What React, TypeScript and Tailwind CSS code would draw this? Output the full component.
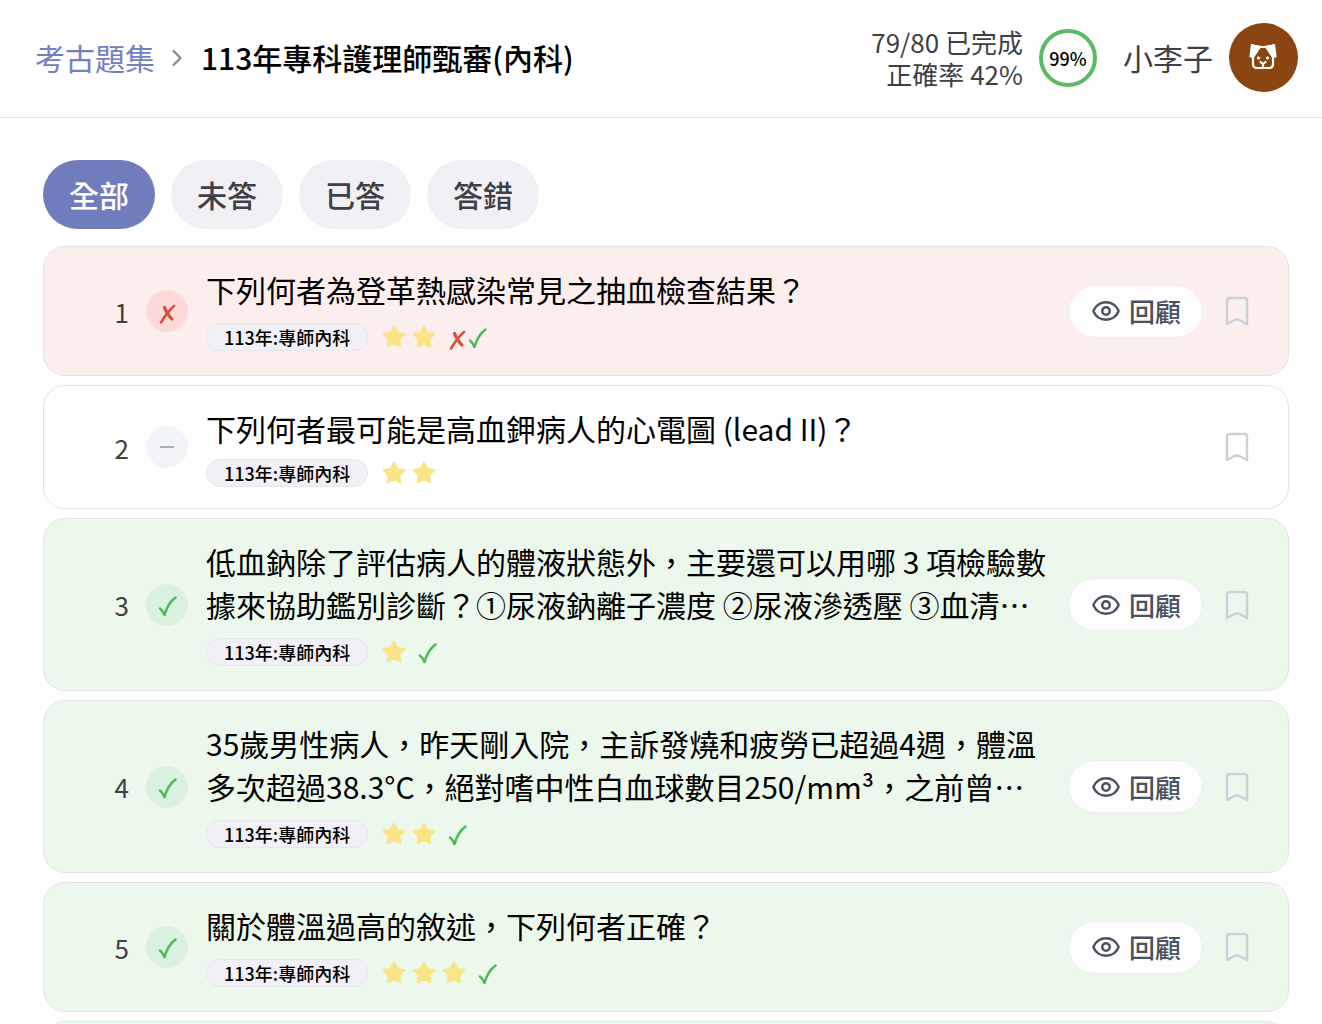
import { ChevronRight, Eye } from 'lucide-react';

type Mark = 'right' | 'wrong';

type Question = {
  id: number;
  text: string;
  tag: string;
  stars: number;
  marks: Mark[];
};

const filters = ['全部', '未答', '已答', '答錯'];

const questions: Question[] = [
  { id: 1, text: '下列何者為登革熱感染常見之抽血檢查結果？', tag: '113年:專師內科', stars: 2, marks: ['wrong', 'right'] },
  { id: 2, text: '下列何者最可能是高血鉀病人的心電圖 (lead II)？', tag: '113年:專師內科', stars: 2, marks: [] },
  {
    id: 3,
    text: '低血鈉除了評估病人的體液狀態外，主要還可以用哪 3 項檢驗數據來協助鑑別診斷？①尿液鈉離子濃度 ②尿液滲透壓 ③血清⋯',
    tag: '113年:專師內科',
    stars: 1,
    marks: ['right'],
  },
  {
    id: 4,
    text: '35歲男性病人，昨天剛入院，主訴發燒和疲勞已超過4週，體溫多次超過38.3°C，絕對嗜中性白血球數目250/mm³，之前曾⋯',
    tag: '113年:專師內科',
    stars: 2,
    marks: ['right'],
  },
  { id: 5, text: '關於體溫過高的敘述，下列何者正確？', tag: '113年:專師內科', stars: 3, marks: ['right'] },
  { id: 6, text: '', tag: '', stars: 0, marks: ['right'] },
];

function MarkIcon({ mark }: { mark: Mark }) {
  if (mark === 'wrong') {
    return (
      <svg viewBox="0 0 20 26" className="h-[26px] w-5 text-[#d9503f]" fill="none" stroke="currentColor" strokeLinecap="round">
        <path d="M17 8C12.500 12 7.500 18.500 4 24.500" strokeWidth="2.600" />
        <path d="M7.500 9.500C9 13 11.500 18 15 21" strokeWidth="3.200" />
      </svg>
    );
  }
  return (
    <svg viewBox="0 0 20 26" className="h-[26px] w-5 text-[#4fb95f]" fill="none" stroke="currentColor" strokeLinecap="round" strokeLinejoin="round">
      <path d="M3 16.500C5 18 6.500 20.500 7.500 23C9.500 16 13.500 9 18.500 5.500" strokeWidth="2.600" />
    </svg>
  );
}

function StarIcon() {
  return (
    <svg viewBox="0 0 24 24" className="size-[26px] text-[#fbe486]" fill="currentColor" stroke="currentColor" strokeWidth="2" strokeLinejoin="round">
      <path d="M12 2.500l2.900 5.900 6.600 1-4.800 4.600 1.200 6.500-5.900-3.100-5.900 3.100 1.200-6.500L2.500 9.400l6.600-1z" />
    </svg>
  );
}

function BookmarkIcon() {
  return (
    <svg viewBox="0 0 24 30" className="h-[30px] w-6" fill="none" stroke="currentColor" strokeWidth="2.500" strokeLinejoin="round">
      <path d="M4.500 2h15q2.500 0 2.500 2.500V28l-6.500-3.500q-3.500-2-7 0L2 28V4.500Q2 2 4.500 2z" />
    </svg>
  );
}

function DogIcon() {
  return (
    <svg viewBox="1 1 30 28" className="h-7 w-[30px]" fill="none" stroke="white" strokeWidth="2.200" strokeLinecap="round" strokeLinejoin="round">
      <path d="M5 13v8q0 4 4 4h12q4 0 4-4v-8" />
      <path d="M9 3q6 2 12 0" />
      <path d="M4 2l7.500 2.500L5.500 13.500H2.500zM26 2l-7.500 2.500 6 9h3z" fill="white" />
      <path d="M12.500 19l2.500 2 2.500-2M15 21v3" />
      <circle cx="10.500" cy="15" r="1.200" fill="white" strokeWidth="1" />
      <circle cx="19.500" cy="15" r="1.200" fill="white" strokeWidth="1" />
    </svg>
  );
}

function Header() {
  return (
    <header className="flex h-[118px] items-center justify-between border-b border-[#e8e8ea] pr-6 pb-0.5 pl-[35px]">
      <nav className="flex items-center text-[30px]">
        <a href="#sets" className="text-[#7380c0]">
          考古題集
        </a>
        <ChevronRight className="mr-[10px] ml-2 size-7 text-[#8c8c8c]" />
        <h1 className="font-medium">113年專科護理師甄審(內科)</h1>
      </nav>
      <div className="flex items-center text-[#3f3f46]">
        <p className="text-right text-[26px] leading-8">
          79/80 已完成
          <br />
          正確率 42%
        </p>
        <div className="ml-4 flex size-[58px] items-center justify-center rounded-full border-4 border-[#5cba64] text-lg font-medium text-black">
          99%
        </div>
        <span className="ml-[26px] text-[30px]">小李子</span>
        <button aria-label="小李子" className="ml-4 flex size-[69px] items-center justify-center rounded-full bg-[#8b4510]">
          <DogIcon />
        </button>
      </div>
    </header>
  );
}

function QuestionCard({ question }: { question: Question }) {
  const { id, text, tag, stars, marks } = question;
  const status = marks[0];

  const cardColor = !status ? 'bg-white' : status === 'right' ? 'bg-[#edf8ed]' : 'bg-[#fceeed]';
  const statusColor = !status ? 'bg-[#f3f4f7]' : status === 'right' ? 'bg-[#daf2dd]' : 'bg-[#fcdad8]';

  return (
    <li className={`flex items-center rounded-[22px] border border-[#e2e5e4] py-[21px] pr-[39px] ${cardColor}`}>
      <span className="w-[85px] shrink-0 text-right text-[26px] text-[#3f3f46]">{id}</span>
      <span className={`mr-[18px] ml-[17px] flex size-[42px] shrink-0 items-center justify-center rounded-full ${statusColor}`}>
        {status ? <MarkIcon mark={status} /> : <span className="h-0.5 w-3.5 bg-[#a9aec0]" />}
      </span>
      <div className="min-w-0 flex-1">
        <p className="min-h-[43px] text-[30px] leading-[43px]">{text}</p>
        <div className="mt-[9px] flex items-center">
          <span className="rounded-full border border-[#e6e6ec] bg-[#f1f0f6] px-[17px] text-lg leading-[26px] font-medium">{tag}</span>
          <span className="ml-[13px] flex gap-1">
            {Array.from({ length: stars }, (_, i) => (
              <StarIcon key={i} />
            ))}
          </span>
          {marks.length > 0 && (
            <span className="ml-2.5 flex h-[34px] items-center">
              {marks.map((mark, i) => (
                <MarkIcon key={i} mark={mark} />
              ))}
            </span>
          )}
        </div>
      </div>
      {status && (
        <button className="ml-4 flex h-[53px] shrink-0 items-center gap-2 rounded-full border border-[#eeeef0] bg-[#fdfdfe] pr-[21px] pl-[22px] text-[26px] leading-8 font-medium text-[#4a5160]">
          <Eye className="size-[30px]" />
          回顧
        </button>
      )}
      <button aria-label="收藏" className="ml-[22px] shrink-0 text-[#cdd0d6]">
        <BookmarkIcon />
      </button>
    </li>
  );
}

export default function App() {
  return (
    <div
      lang="zh-TW"
      className="h-screen overflow-hidden bg-white font-['Noto_Sans_CJK_TC',sans-serif] text-black"
    >
      <Header />
      <main className="pt-[42px] pr-[33px] pl-[43px]">
        <div className="flex gap-4">
          {filters.map((filter, i) => (
            <button
              key={filter}
              className={`h-[69px] rounded-full px-[26px] text-[30px] font-medium ${
                i === 0 ? 'bg-[#707dbd] text-white' : 'bg-[#f1f0f5] text-[#3f3f46]'
              }`}
            >
              {filter}
            </button>
          ))}
        </div>
        <ul className="mt-[17px] flex flex-col gap-[9px]">
          {questions.map((question) => (
            <QuestionCard key={question.id} question={question} />
          ))}
        </ul>
      </main>
    </div>
  );
}
